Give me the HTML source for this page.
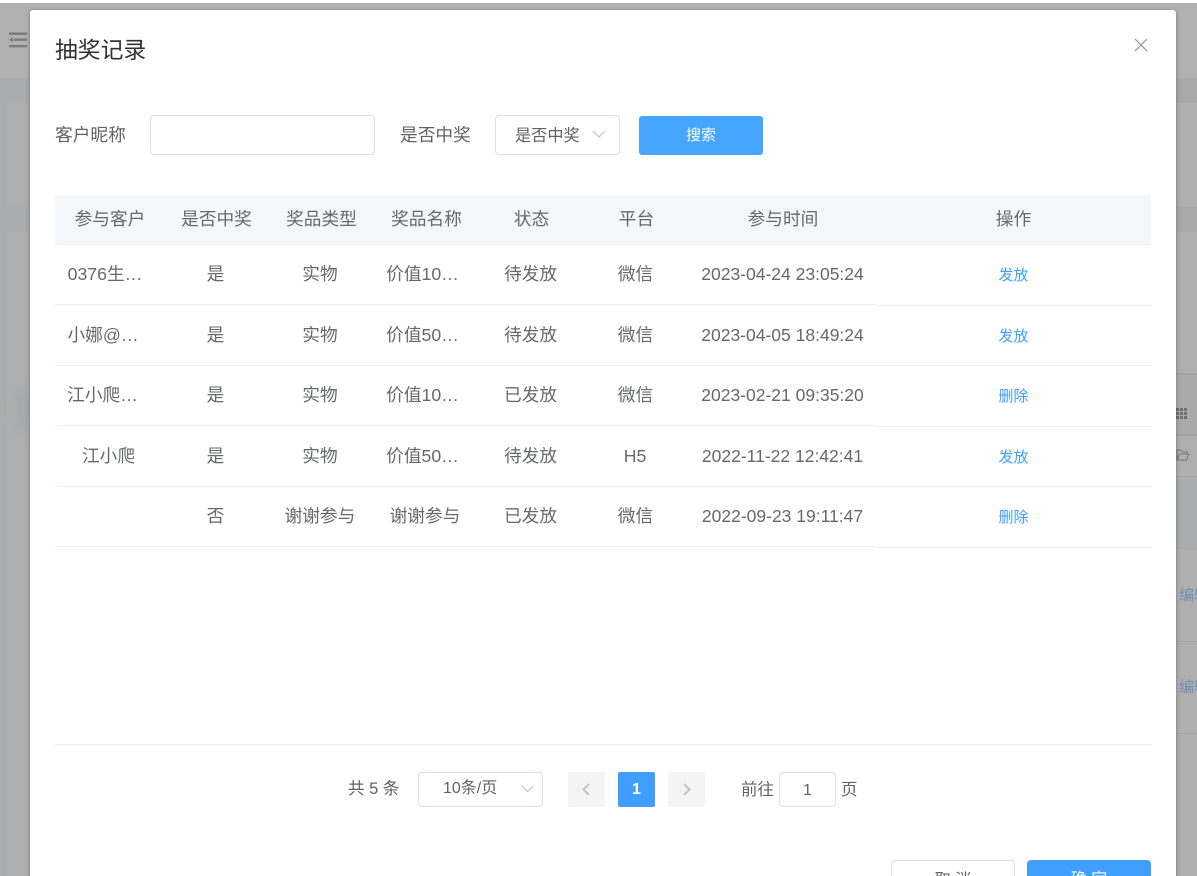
<!DOCTYPE html>
<html lang="zh"><head><meta charset="utf-8">
<style>
html,body{margin:0;padding:0;width:1197px;height:876px;overflow:hidden;background:#fff}
body{position:relative;font-family:"Liberation Sans","Noto Sans CJK SC",sans-serif;color:#606266}
.a{position:absolute}
.t{position:absolute;white-space:nowrap;text-align:center;transform:translateX(-50%);line-height:24px;font-size:17.7px;color:#66686d}
.t.d{font-size:17.5px}
.l{height:1px;background:#ebeef5;position:absolute}
.t.lk{font-size:15px;color:#409eff;margin-left:-.5px;margin-top:1px}
</style></head><body>
<div class="a" style="left:0;top:3px;width:1197px;height:873px;background:#afafaf"></div>
<div class="a" style="left:0;top:3px;width:1197px;height:75px;background:#b1b1b1"></div>
<div class="a" style="left:0;top:78px;width:30px;height:798px;background:#abacad"></div>
<div class="a" style="left:6px;top:103px;width:24px;height:104px;background:#aeaeae"></div>
<div class="a" style="left:6px;top:232px;width:24px;height:644px;background:#aeaeae"></div>
<div class="a" style="left:18px;top:390px;width:12px;height:40px;background:#a0a8b1;filter:blur(6px)"></div>
<div class="a" style="left:1176px;top:78px;width:21px;height:25px;background:#a8a8a8"></div>
<div class="a" style="left:1176px;top:207px;width:21px;height:25px;background:#a8a8a8"></div>
<div class="a" style="left:1176px;top:373px;width:21px;height:62px;background:#aaa"></div>
<div class="a" style="left:1176px;top:373px;width:21px;height:2px;background:#a3a3a3"></div>
<div class="a" style="left:1176px;top:434px;width:21px;height:2px;background:#a3a3a3"></div>
<div class="a" style="left:1176px;top:476px;width:21px;height:1px;background:#a3a3a3"></div>
<div class="a" style="left:1176px;top:548px;width:21px;height:1px;background:#a5a5a5"></div>
<div class="a" style="left:1176px;top:641px;width:21px;height:1px;background:#a5a5a5"></div>
<div class="a" style="left:1176px;top:733px;width:21px;height:1px;background:#a5a5a5"></div>
<div class="a" style="left:1176px;top:480px;width:21px;height:68px;background:#a9abad"></div>
<svg class="a" style="left:8px;top:32px" width="20" height="17" viewBox="0 0 20 17"><path d="M1 0.500h18v2.400H1zM6 6.500h13v2.400H6zM1 13h18v2.400H1z" fill="#7a7a7a"/><path d="M1 7.700l4-2.500v5z" fill="#7a7a7a"/></svg>
<svg class="a" style="left:1176px;top:408px" width="12" height="12" viewBox="0 0 12 12"><path d="M0 0h3v3H0zM4 0h3v3H4zM8 0h3v3H8zM0 4h3v3H0zM4 4h3v3H4zM8 4h3v3H8zM0 8h3v3H0zM4 8h3v3H4zM8 8h3v3H8z" fill="#707070"/></svg>
<svg class="a" style="left:1176px;top:449px" width="14" height="12" viewBox="0 0 14 12"><path d="M1 11V1h4l1.500 2H11v2M1 11l2.500-6H13l-2.500 6z" fill="none" stroke="#777" stroke-width="1"/></svg>
<div class="a" style="left:1179px;top:584px;font-size:15px;line-height:24px;color:#6d8fb5;white-space:nowrap">编辑</div>
<div class="a" style="left:1179px;top:676px;font-size:15px;line-height:24px;color:#6d8fb5;white-space:nowrap">编辑</div>

<div class="a" style="left:30px;top:10px;width:1146px;height:880px;background:#fff;border-radius:3px;box-shadow:0 1px 4px rgba(0,0,0,.35)"></div>

<div class="a" style="left:55px;top:31.500px;font-size:22.800px;line-height:36px;color:#303133;white-space:nowrap">抽奖记录</div>
<svg class="a" style="left:1134px;top:38px" width="14" height="14" viewBox="0 0 14 14"><path d="M1 1L13 13M13 1L1 13" stroke="#909399" stroke-width="1.200" fill="none"/></svg>

<div class="a" style="left:55px;top:123px;font-size:17.700px;line-height:24px;white-space:nowrap">客户昵称</div>
<div class="a" style="left:150px;top:115px;width:223px;height:38px;border:1px solid #dcdfe6;border-radius:4px"></div>
<div class="a" style="left:400px;top:123px;font-size:17.700px;line-height:24px;white-space:nowrap">是否中奖</div>
<div class="a" style="left:495px;top:115px;width:123px;height:38px;border:1px solid #dcdfe6;border-radius:4px"></div>
<div class="a" style="left:515px;top:125px;font-size:16.200px;line-height:22px;white-space:nowrap">是否中奖</div>
<svg class="a" style="left:592px;top:130px" width="14" height="9" viewBox="0 0 14 9"><path d="M1 1l6 6 6-6" stroke="#c0c4cc" stroke-width="1.200" fill="none"/></svg>
<div class="a" style="left:639px;top:116px;width:124px;height:39px;background:#46a6ff;border-radius:3px;color:#fff;font-size:15px;line-height:40px;text-align:center">搜索</div>

<div class="a" style="left:55px;top:195px;width:1096px;height:49px;background:#f5f6fa"></div>
<div class="l" style="left:55px;top:244px;width:1096px"></div>

<div class="t" style="left:110px;top:207px">参与客户</div>
<div class="t" style="left:216.500px;top:207px">是否中奖</div>
<div class="t" style="left:321.500px;top:207px">奖品类型</div>
<div class="t" style="left:426.500px;top:207px">奖品名称</div>
<div class="t" style="left:531.500px;top:207px">状态</div>
<div class="t" style="left:636.500px;top:207px">平台</div>
<div class="t" style="left:783px;top:207px">参与时间</div>
<div class="t" style="left:1013.500px;top:207px">操作</div>

<div class="l" style="left:55px;top:304px;width:821px"></div><div class="l" style="left:876px;top:305px;width:275px"></div>
<div class="l" style="left:55px;top:365px;width:1096px"></div>
<div class="l" style="left:55px;top:425px;width:821px"></div><div class="l" style="left:876px;top:426px;width:275px"></div>
<div class="l" style="left:55px;top:486px;width:1096px"></div>
<div class="l" style="left:55px;top:546px;width:821px"></div><div class="l" style="left:876px;top:547px;width:275px"></div>
<div class="l" style="left:55px;top:744px;width:1096px"></div>

<div class="t" style="left:105px;top:262px">0376生…</div><div class="t" style="left:215.500px;top:262px">是</div><div class="t" style="left:320px;top:262px">实物</div><div class="t" style="left:422.500px;top:262px">价值10…</div><div class="t" style="left:530.500px;top:262px">待发放</div><div class="t" style="left:635.500px;top:262px">微信</div><div class="t d" style="left:782.500px;top:262px">2023-04-24 23:05:24</div><div class="t lk" style="left:1014px;top:263px">发放</div>
<div class="t" style="left:103px;top:323px">小娜@…</div><div class="t" style="left:215.500px;top:323px">是</div><div class="t" style="left:320px;top:323px">实物</div><div class="t" style="left:422.500px;top:323px">价值50…</div><div class="t" style="left:530.500px;top:323px">待发放</div><div class="t" style="left:635.500px;top:323px">微信</div><div class="t d" style="left:782.500px;top:323px">2023-04-05 18:49:24</div><div class="t lk" style="left:1014px;top:324px">发放</div>
<div class="t" style="left:102.500px;top:383px">江小爬…</div><div class="t" style="left:215.500px;top:383px">是</div><div class="t" style="left:320px;top:383px">实物</div><div class="t" style="left:422.500px;top:383px">价值10…</div><div class="t" style="left:530.500px;top:383px">已发放</div><div class="t" style="left:635.500px;top:383px">微信</div><div class="t d" style="left:782.500px;top:383px">2023-02-21 09:35:20</div><div class="t lk" style="left:1014px;top:384px">删除</div>
<div class="t" style="left:108.500px;top:444px">江小爬</div><div class="t" style="left:215.500px;top:444px">是</div><div class="t" style="left:320px;top:444px">实物</div><div class="t" style="left:422.500px;top:444px">价值50…</div><div class="t" style="left:530.500px;top:444px">待发放</div><div class="t" style="left:635px;top:444px">H5</div><div class="t d" style="left:782.500px;top:444px">2022-11-22 12:42:41</div><div class="t lk" style="left:1014px;top:445px">发放</div>
<div class="t" style="left:215.500px;top:504px">否</div><div class="t" style="left:320px;top:504px">谢谢参与</div><div class="t" style="left:425px;top:504px">谢谢参与</div><div class="t" style="left:530.500px;top:504px">已发放</div><div class="t" style="left:635.500px;top:504px">微信</div><div class="t d" style="left:782.500px;top:504px">2022-09-23 19:11:47</div><div class="t lk" style="left:1014px;top:505px">删除</div>

<div class="a" style="left:348px;top:778px;font-size:16.500px;line-height:22px;white-space:nowrap">共 5 条</div>
<div class="a" style="left:418px;top:772px;width:123px;height:33px;border:1px solid #dcdfe6;border-radius:4px"></div>
<div class="a" style="left:443px;top:778px;font-size:16px;line-height:22px;white-space:nowrap">10条/页</div>
<svg class="a" style="left:521px;top:785px" width="13" height="8" viewBox="0 0 13 8"><path d="M1 1l5.500 5.500L12 1" stroke="#c0c4cc" stroke-width="1.200" fill="none"/></svg>
<div class="a" style="left:568px;top:772px;width:37px;height:35px;background:#f4f4f5;border-radius:2px"></div>
<svg class="a" style="left:581px;top:783px" width="10" height="13" viewBox="0 0 10 13"><path d="M8 1L2.500 6.500 8 12" stroke="#c0c4cc" stroke-width="2" fill="none"/></svg>
<div class="a" style="left:618px;top:772px;width:37px;height:35px;background:#409eff;border-radius:2px;color:#fff;font-size:16px;font-weight:700;line-height:35px;text-align:center">1</div>
<div class="a" style="left:668px;top:772px;width:37px;height:35px;background:#f4f4f5;border-radius:2px"></div>
<svg class="a" style="left:682px;top:783px" width="10" height="13" viewBox="0 0 10 13"><path d="M2 1l5.500 5.500L2 12" stroke="#c0c4cc" stroke-width="2" fill="none"/></svg>
<div class="a" style="left:741px;top:779px;font-size:16.500px;line-height:22px;white-space:nowrap">前往</div>
<div class="a" style="left:779px;top:772px;width:55px;height:33px;border:1px solid #dcdfe6;border-radius:4px;font-size:16px;line-height:35px;text-align:center">1</div>
<div class="a" style="left:841px;top:779px;font-size:16.500px;line-height:22px;white-space:nowrap">页</div>

<div class="a" style="left:891px;top:860px;width:122px;height:39px;border:1px solid #dcdfe6;border-radius:4px;background:#fff;font-size:16px;line-height:39px;text-align:center">取 消</div>
<div class="a" style="left:1027px;top:860px;width:124px;height:41px;background:#409eff;border-radius:4px;color:#fff;font-size:16px;line-height:39px;text-align:center">确 定</div>
</body></html>
